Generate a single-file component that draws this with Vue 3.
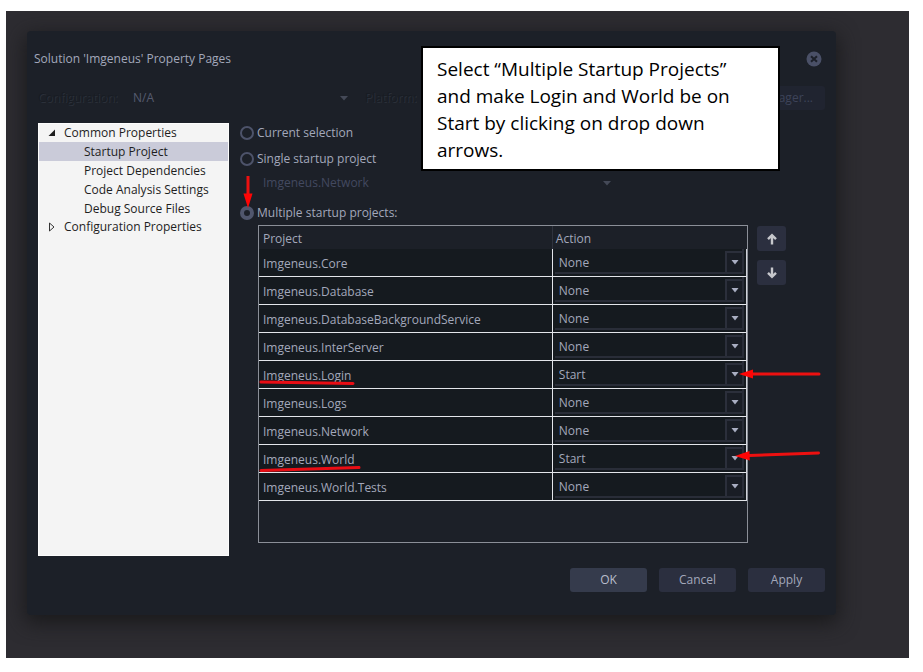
<script setup>
import { ref } from 'vue'

const startup = ref('multiple')
const configuration = ref('N/A')
const platform = ref('')
const single = ref('Imgeneus.Network')

const pages = ['Startup Project', 'Project Dependencies', 'Code Analysis Settings', 'Debug Source Files']
const selectedPage = ref('Startup Project')

const projects = ref([
  { name: 'Imgeneus.Core', action: 'None' },
  { name: 'Imgeneus.Database', action: 'None' },
  { name: 'Imgeneus.DatabaseBackgroundService', action: 'None' },
  { name: 'Imgeneus.InterServer', action: 'None' },
  { name: 'Imgeneus.Login', action: 'Start', mark: 'login' },
  { name: 'Imgeneus.Logs', action: 'None' },
  { name: 'Imgeneus.Network', action: 'None' },
  { name: 'Imgeneus.World', action: 'Start', mark: 'world' },
  { name: 'Imgeneus.World.Tests', action: 'None' },
])
</script>

<template>
  <main class="desktop">
    <section class="dialog" aria-labelledby="dialog-title">
      <header class="title-bar">
        <h1 id="dialog-title">Solution 'Imgeneus' Property Pages</h1>
        <button class="close" type="button" aria-label="Close">
          <svg viewBox="0 0 16 16" width="16" height="16">
            <circle cx="8" cy="8" r="7.5" fill="#4a5067" />
            <path d="M5 5.2 11 10.8M11 5.2 5 10.8" stroke="#1c2029" stroke-width="2" />
          </svg>
        </button>
      </header>

      <div class="config">
        <label class="etched config-label" for="configuration">Configuration:</label>
        <span class="combo config-combo">
          <select id="configuration" v-model="configuration" disabled>
            <option>N/A</option>
          </select>
          <svg class="chevron" viewBox="0 0 8 5" width="8" height="5"><path d="M0 0h8L4 4.5z" /></svg>
        </span>
        <label class="etched" for="platform">Platform:</label>
        <span class="combo platform-combo">
          <select id="platform" v-model="platform" disabled></select>
        </span>
        <button class="manager" type="button" disabled>ager...</button>
      </div>

      <div class="body">
        <nav class="tree">
          <div class="node">
            <svg viewBox="0 0 8 8" width="8" height="8"><path d="M7 0.5V7H0.5z" fill="#1e1e1e" /></svg>
            <a href="#common">Common Properties</a>
          </div>
          <ul>
            <li v-for="page in pages" :key="page" :class="{ selected: page === selectedPage }">
              <a href="#page" @click.prevent="selectedPage = page">{{ page }}</a>
            </li>
          </ul>
          <div class="node">
            <svg viewBox="0 0 8 10" width="8" height="10">
              <path d="M1.500 1 6 5 1.500 9z" fill="none" stroke="#333" />
            </svg>
            <a href="#configuration">Configuration Properties</a>
          </div>
        </nav>

        <div class="panel">
          <label class="radio">
            <input v-model="startup" type="radio" name="startup" value="current" />Current selection
          </label>
          <label class="radio second">
            <input v-model="startup" type="radio" name="startup" value="single" />Single startup project
          </label>
          <span class="combo single-combo">
            <select v-model="single" aria-label="Single startup project" disabled>
              <option>Imgeneus.Network</option>
            </select>
            <svg class="chevron" viewBox="0 0 8 5" width="8" height="5"><path d="M0 0h8L4 4.5z" /></svg>
          </span>
          <label class="radio multiple">
            <input v-model="startup" type="radio" name="startup" value="multiple" />Multiple startup projects:
            <svg class="pointer-down" viewBox="0 0 10 32" width="10" height="32">
              <path d="M5 0V20" stroke="#ed1010" stroke-width="3" />
              <path d="M0.5 17.500h9L5 32z" fill="#ff0505" />
            </svg>
          </label>

          <div class="projects">
            <div class="frame">
              <table>
                <thead>
                  <tr>
                    <th class="name" scope="col">Project</th>
                    <th scope="col">Action</th>
                  </tr>
                </thead>
                <tbody>
                  <tr v-for="project in projects" :key="project.name">
                    <td class="name">
                      {{ project.name }}
                      <svg v-if="project.mark === 'login'" class="underline" viewBox="0 0 102 12" width="102" height="12">
                        <path d="M2 5 94 6.500" />
                      </svg>
                      <svg v-if="project.mark === 'world'" class="underline" viewBox="0 0 102 12" width="102" height="12">
                        <path d="M2 9.500 100 6.500" />
                      </svg>
                    </td>
                    <td class="action">
                      <span class="combo action-combo">
                        <select v-model="project.action" :aria-label="`Action for ${project.name}`">
                          <option>None</option>
                          <option>Start</option>
                          <option>Start without debugging</option>
                        </select>
                        <span class="drop">
                          <svg viewBox="0 0 8 5" width="8" height="5"><path d="M0.500 0h7L4 4.500z" fill="#a9aec2" /></svg>
                        </span>
                      </span>
                      <svg v-if="project.mark === 'login'" class="pointer" viewBox="0 0 86 18" width="86" height="18">
                        <path d="M16 9H84" stroke="#ed1010" stroke-width="3" stroke-linecap="round" />
                        <path d="M4 9 18 4.500v9z" fill="#ff0505" />
                      </svg>
                      <svg v-if="project.mark === 'world'" class="pointer" viewBox="0 0 86 18" width="86" height="18">
                        <path d="M14 6.500 83.500 4" stroke="#ed1010" stroke-width="3" stroke-linecap="round" />
                        <path d="M0 7 14.500 2l.3 9.500z" fill="#ff0505" />
                      </svg>
                    </td>
                  </tr>
                </tbody>
              </table>
            </div>
            <div class="order">
              <button type="button" aria-label="Move up">
                <svg viewBox="0 0 12 12" width="12" height="12"><path d="M6 11.500V2M2 6.200 6 2.200l4 4" /></svg>
              </button>
              <button type="button" aria-label="Move down">
                <svg viewBox="0 0 12 12" width="12" height="12"><path d="M6 .5V10M2 5.800 6 9.800l4-4" /></svg>
              </button>
            </div>
          </div>
        </div>
      </div>

      <footer class="actions">
        <button class="primary" type="button">OK</button>
        <button type="button">Cancel</button>
        <button type="button">Apply</button>
      </footer>

      <aside class="callout">
        Select “Multiple Startup Projects”<br />
        and make Login and World be on<br />
        Start by clicking on drop down<br />
        arrows.
      </aside>
    </section>
  </main>
</template>

<style>
body {
  background: #fff;
}
</style>

<style scoped>
* {
  box-sizing: border-box;
}

.desktop {
  display: flex;
  min-height: 100vh;
  border: solid #fff;
  border-width: 11px 14px 14px 6px;
  padding: 20px 73px 43px 21px;
  background: #2d2c31;
  color: #a3a8bb;
  font: 12px/18px "Open Sans", "Noto Sans", sans-serif;
}

.dialog {
  position: relative;
  display: flex;
  flex: 1;
  flex-direction: column;
  min-width: 0;
  padding: 0 11px 23px;
  border-radius: 4px;
  background: #1c2028;
  box-shadow: 0 6px 20px 2px #1a1a1c;
}

button,
select {
  margin: 0;
  border: 0;
  padding: 0;
  color: inherit;
  font: inherit;
}

button {
  border-radius: 3px;
  background: #2b2f3f;
}

.title-bar {
  display: flex;
  align-items: center;
  justify-content: space-between;
  height: 55px;
  padding-right: 3px;
}

h1 {
  margin: 0 0 0 -4px;
  font-size: 12px;
  font-weight: 400;
}

.close {
  display: grid;
  background: none;
}

.config {
  display: flex;
  align-items: center;
  height: 24px;
  margin-bottom: 13px;
}

.etched {
  color: #181c23;
  text-shadow: 1px 1px #2b303a;
}

.config-label {
  width: 91px;
}

.combo {
  display: grid;
  align-items: center;
}

.combo > * {
  grid-area: 1 / 1;
}

.combo select {
  width: 100%;
  height: 22px;
  appearance: none;
  background: transparent;
  opacity: 1;
}

.chevron {
  justify-self: end;
  margin-right: 4px;
  fill: #444957;
  pointer-events: none;
}

.config-combo {
  flex: 0 0 223px;
  margin-right: 13px;
  padding-left: 4px;
  color: #555b6f;
}

.platform-combo {
  flex: 1;
}

.manager {
  flex: 0 0 160px;
  height: 24px;
  padding-right: 12px;
  background: #202430;
  color: #3d4359;
  text-align: right;
}

.body {
  display: flex;
  flex: 1;
  gap: 11px;
}

.tree {
  flex: 0 0 191px;
  border: 1px solid #fcfcfc;
  background: #f4f4f4;
  color: #1e1e1e;
}

.tree a {
  color: inherit;
  text-decoration: none;
}

.tree ul {
  margin: 0;
  padding: 0;
  list-style: none;
}

.tree li {
  padding-left: 45px;
  line-height: 19px;
}

.tree .selected {
  background: #cacbd9;
}

.node {
  display: flex;
  align-items: center;
  gap: 8px;
  height: 18px;
  padding-left: 9px;
}

.panel {
  display: flex;
  flex: 1;
  flex-direction: column;
  min-width: 0;
  padding-bottom: 13px;
}

.radio {
  position: relative;
  display: flex;
  align-items: center;
  gap: 3px;
  height: 20px;
}

.radio input {
  width: 14px;
  height: 14px;
  margin: 0;
  border: 2px solid #4d536a;
  border-radius: 50%;
  appearance: none;
}

.radio input:checked {
  border-width: 4px;
  border-color: #50566d;
  background: #1c2029;
}

.second {
  margin-top: 6px;
}

.multiple {
  margin: 9px 0 2px;
}

.pointer-down {
  position: absolute;
  bottom: 15px;
  left: 3px;
}

.single-combo {
  width: 61%;
  margin: 3px 0 0 18px;
  padding: 0 0 0 5px;
  color: #434960;
}

.projects {
  display: flex;
  flex: 1;
  gap: 9px;
  padding: 0 39px 0 18px;
}

.frame {
  flex: 1;
  border: 1px solid #8b8f98;
}

table {
  width: 100%;
  border-spacing: 0;
  table-layout: fixed;
}

th {
  height: 23px;
  border-left: 1px solid #2f333e;
  padding: 2px 0 0 3px;
  font-weight: 400;
  text-align: left;
}

th.name {
  width: 60%;
  border-left: 0;
  padding-left: 4px;
}

td {
  position: relative;
  height: 28px;
  border-bottom: 1px solid #e3e5ea;
  padding: 0;
  background: #151a1f;
}

td.name {
  padding: 2px 0 0 4px;
}

td.action {
  border-right: 1px solid #d0d3da;
  border-left: 1px solid #e3e5ea;
}

.action-combo {
  height: 25px;
  margin: 0 2px 2px;
  border: solid #292d38;
  border-width: 0 2px 2px 0;
}

.action-combo select {
  height: 23px;
  padding: 5px 0 0 4px;
}

.drop {
  display: grid;
  place-items: center;
  justify-self: end;
  align-self: end;
  width: 17px;
  height: 21px;
  border: solid #2b2f3b;
  border-width: 2px 0 0 2px;
  background: #191d25;
  pointer-events: none;
}

.underline {
  position: absolute;
  top: 16px;
  left: 0;
  z-index: 1;
  fill: none;
  stroke: #e90d14;
  stroke-linecap: round;
  stroke-width: 3;
}

.pointer {
  position: absolute;
  top: 4px;
  right: -75px;
  z-index: 1;
  pointer-events: none;
}

.order {
  display: flex;
  flex-direction: column;
  gap: 9px;
  padding-top: 1px;
}

.order button {
  display: grid;
  place-items: center;
  width: 29px;
  height: 25px;
}

.order path {
  fill: none;
  stroke: #c6c7cc;
  stroke-width: 2.4;
}

.actions {
  display: flex;
  justify-content: flex-end;
  gap: 12px;
  margin-top: 12px;
}

.actions button {
  width: 77px;
  height: 24px;
}

.actions .primary {
  background: #353b4c;
  color: #b9bdcb;
}

.callout {
  position: absolute;
  top: 15px;
  right: 56px;
  z-index: 2;
  width: 359px;
  border: 2px solid #000;
  padding: 8px 14px 5px;
  background: #fff;
  color: #000;
  font: 19px/27px "Open Sans", "Noto Sans", sans-serif;
  white-space: nowrap;
}
</style>
